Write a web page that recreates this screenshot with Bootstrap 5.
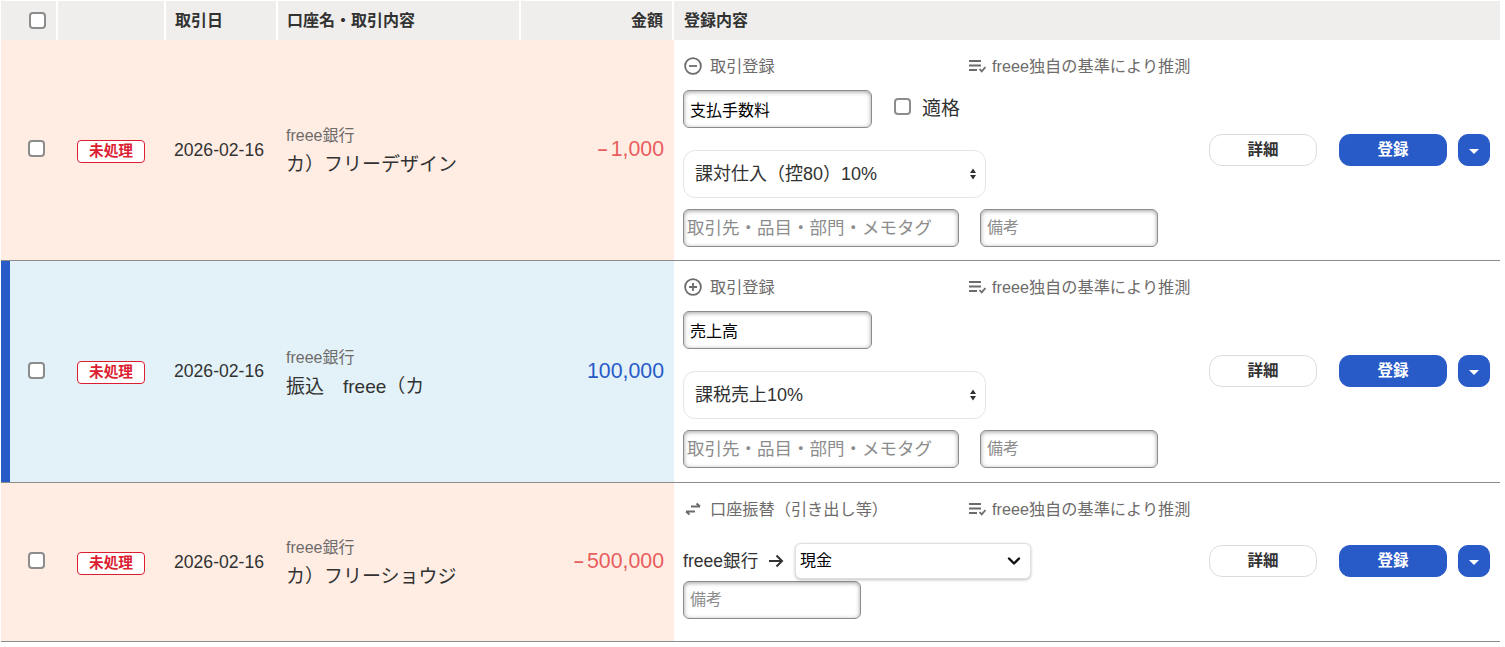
<!DOCTYPE html>
<html lang="ja">
<head>
<meta charset="UTF-8">
<meta name="viewport" content="width=device-width, initial-scale=1.0">
<title>取引一覧</title>
<link href="https://cdn.jsdelivr.net/npm/bootstrap@5.3.0/dist/css/bootstrap.min.css" rel="stylesheet">
<style>
  body { font-family: "Liberation Sans", "Noto Sans CJK JP", sans-serif; color: #323232; background: #fff; }
  .deal-wrap { padding: 1px 0 0 1px; width: 1500px; }
  .deal-table { table-layout: fixed; width: 1499px; margin: 0; border-collapse: separate; border-spacing: 0; }
  .deal-table th { background: #efeeed; height: 39px; padding: 0 9px; font-size: 16px; font-weight: 700; vertical-align: middle; border: 0; border-right: 2px solid #fff; color: #323232; }
  .deal-table th:last-child { border-right: 0; padding-left: 10px; }
  .deal-table td { padding: 0; vertical-align: middle; border: 0; border-bottom: 1px solid #8c8c8c; color: #323232; }
  .row-out td.tone { background: #ffede4; }
  .row-in td.tone { background: #e3f2f8; }
  .row-in td.bar { box-shadow: inset 9px 0 0 #285ac8; }
  td.pick { padding-left: 27px !important; }
  .tick { display: block; width: 17px; height: 17px; margin: 0 0 3px; border: 2px solid #8c8c8c; border-radius: 4px; background: #fff; appearance: none; }
  .th-tick { margin: 0 0 0 28px; }
  .state-tag { display: block; width: 68px; margin: 2px 0 0 19px; height: 23px; line-height: 21px; border: 1px solid #dc1e32; border-radius: 4px; background: #fff; color: #dc1e32; font-size: 14.7px; font-weight: 700; text-align: center; }
  .deal-date { font-size: 17.6px; padding-left: 8px !important; }
  .deal-desc { padding: 4px 0 0 8px !important; }
  .bank-name { font-size: 16px; line-height: 22px; color: #6e6b6b; }
  .deal-name { font-size: 19px; line-height: 28px; margin-top: 4px; }
  .deal-amt { font-size: 21.3px; text-align: right; padding-right: 10px !important; }
  .minus-mark { font-size: 17px; font-weight: 700; margin-right: 3px; }
  .amt-red { color: #e85d5d !important; }
  .amt-blue { color: #285ac8 !important; }
  .form-cell { vertical-align: top !important; padding: 16px 0 0 9px !important; }
  .head-line { height: 20px; font-size: 16.2px; color: #6e6b6b; line-height: 20px; }
  .head-kind { width: 285px; gap: 8px; margin-left: 1px; }
  .head-guess { gap: 6px; }
  .plain-box { border: 1px solid #8c8c8c; border-radius: 6px; background: #fff; box-shadow: inset 0 1px 4px rgba(0,0,0,.38); color: #000; padding: 0 6px; height: 38px; font-size: 16px; min-height: 0; }
  .plain-box::placeholder { color: #8c8c8c; opacity: 1; }
  .acct-box { width: 189px; }
  .tag-box { width: 276px; font-size: 17.5px; padding: 0 3px; }
  .memo-box { width: 178px; }
  .ok-check { margin: 0 0 0 22px; gap: 11px; font-size: 19px; }
  .ok-check .tick { margin: 0 0 6px; }
  .tax-select { width: 303px; height: 48px; border: 1px solid #e5e5e5; border-radius: 12px; padding: 0 11px; font-size: 18px; color: #323232; background-color: #fff; background-size: 8px 12px; background-position: right 8px center; background-image: url("data:image/svg+xml,%3csvg xmlns='http://www.w3.org/2000/svg' viewBox='0 0 8 12'%3e%3cpath fill='%23323232' d='M4 0.5 7 5H1zM4 11.5 1 7h6z'/%3e%3c/svg%3e"); }
  .dest-select { width: 236px; height: 36px; padding: 0 32px 0 4px; font-size: 16px; color: #000; border: 1px solid #e0e0e0; border-radius: 6px; box-shadow: 0 1px 3px rgba(0,0,0,.25); background-position: right 8px center; background-size: 16px 12px; background-image: url("data:image/svg+xml,%3csvg xmlns='http://www.w3.org/2000/svg' viewBox='0 0 16 12'%3e%3cpath fill='none' stroke='%23111' stroke-width='2.4' stroke-linecap='round' stroke-linejoin='round' d='M3 3.5 8 8.5l5-5'/%3e%3c/svg%3e"); }
  .from-acct { font-size: 17.6px; gap: 10px; width: 112px; }
  .act-cell { padding-left: 9px !important; }
  .act-line { margin-bottom: 1px; }
  .act-line-low { margin-bottom: 2px; }
  .act-btn { height: 32px; width: 108px; padding: 0; font-size: 15.5px; font-weight: 700; border-radius: 11px; line-height: 1; }
  .btn-detail { background: #fff; border: 1px solid #dcdcdc; color: #323232; border-radius: 13px; }
  .btn-save { background: #285ac8; border: 1px solid #285ac8; color: #fff; margin-left: 22px; }
  .btn-more { background: #285ac8; border: 1px solid #285ac8; height: 32px; width: 32px; margin-left: 11px; border-radius: 10px; padding: 0; }
  .btn-more span { display: block; margin: 3px auto 0; width: 0; height: 0; border-left: 5px solid transparent; border-right: 5px solid transparent; border-top: 5px solid #fff; }
</style>
</head>
<body>
<div class="deal-wrap">
  <table class="table deal-table">
    <colgroup>
      <col style="width:57px"><col style="width:108px"><col style="width:112px"><col style="width:243px"><col style="width:153px"><col style="width:526px"><col style="width:300px">
    </colgroup>
    <thead>
      <tr>
        <th class="p-0"><input class="tick th-tick" type="checkbox"></th>
        <th></th>
        <th>取引日</th>
        <th>口座名・取引内容</th>
        <th class="text-end">金額</th>
        <th colspan="2">登録内容</th>
      </tr>
    </thead>
    <tbody>
      <!-- 1行目 -->
      <tr class="row-out">
        <td class="tone pick"><input class="tick" type="checkbox"></td>
        <td class="tone"><span class="state-tag">未処理</span></td>
        <td class="tone deal-date">2026-02-16</td>
        <td class="tone deal-desc"><div class="bank-name">freee銀行</div><div class="deal-name">カ）フリーデザイン</div></td>
        <td class="tone deal-amt amt-red"><span class="minus-mark">−</span>1,000</td>
        <td class="form-cell" style="height:221px">
          <div class="d-flex head-line">
            <div class="d-flex align-items-center head-kind">
              <svg width="18" height="18" viewBox="0 0 18 18" fill="none" stroke="#6e6b6b" stroke-width="1.8"><circle cx="9" cy="9" r="7.9"/><path d="M5 9h8"/></svg>
              <span>取引登録</span>
            </div>
            <div class="d-flex align-items-center head-guess">
              <svg width="17" height="14" viewBox="0 0 17 14" fill="none" stroke="#6e6b6b" stroke-width="2"><path d="M0 2h12M0 6.5h12M0 11h8"/><path stroke-width="1.8" d="M10.5 10l2.2 2.4L16.500 8"/></svg>
              <span>freee独自の基準により推測</span>
            </div>
          </div>
          <div class="d-flex align-items-center" style="margin-top:14px">
            <input class="form-control plain-box acct-box" value="支払手数料">
            <label class="d-flex align-items-center ok-check"><input class="tick" type="checkbox"><span>適格</span></label>
          </div>
          <select class="form-select tax-select" style="margin-top:22px"><option>課対仕入（控80）10%</option></select>
          <div class="d-flex" style="margin-top:11px;gap:21px">
            <input class="form-control plain-box tag-box" placeholder="取引先・品目・部門・メモタグ">
            <input class="form-control plain-box memo-box" placeholder="備考">
          </div>
        </td>
        <td class="act-cell">
          <div class="d-flex align-items-center act-line">
            <button class="btn act-btn btn-detail">詳細</button>
            <button class="btn act-btn btn-save">登録</button>
            <button class="btn btn-more"><span></span></button>
          </div>
        </td>
      </tr>
      <!-- 2行目 -->
      <tr class="row-in">
        <td class="tone bar pick"><input class="tick" type="checkbox"></td>
        <td class="tone"><span class="state-tag">未処理</span></td>
        <td class="tone deal-date">2026-02-16</td>
        <td class="tone deal-desc"><div class="bank-name">freee銀行</div><div class="deal-name">振込　freee（カ</div></td>
        <td class="tone deal-amt amt-blue">100,000</td>
        <td class="form-cell" style="height:222px">
          <div class="d-flex head-line">
            <div class="d-flex align-items-center head-kind">
              <svg width="18" height="18" viewBox="0 0 18 18" fill="none" stroke="#6e6b6b" stroke-width="1.8"><circle cx="9" cy="9" r="7.9"/><path d="M5 9h8M9 5v8"/></svg>
              <span>取引登録</span>
            </div>
            <div class="d-flex align-items-center head-guess">
              <svg width="17" height="14" viewBox="0 0 17 14" fill="none" stroke="#6e6b6b" stroke-width="2"><path d="M0 2h12M0 6.5h12M0 11h8"/><path stroke-width="1.8" d="M10.5 10l2.2 2.4L16.500 8"/></svg>
              <span>freee独自の基準により推測</span>
            </div>
          </div>
          <div class="d-flex align-items-center" style="margin-top:14px">
            <input class="form-control plain-box acct-box" value="売上高">
          </div>
          <select class="form-select tax-select" style="margin-top:22px"><option>課税売上10%</option></select>
          <div class="d-flex" style="margin-top:11px;gap:21px">
            <input class="form-control plain-box tag-box" placeholder="取引先・品目・部門・メモタグ">
            <input class="form-control plain-box memo-box" placeholder="備考">
          </div>
        </td>
        <td class="act-cell">
          <div class="d-flex align-items-center act-line">
            <button class="btn act-btn btn-detail">詳細</button>
            <button class="btn act-btn btn-save">登録</button>
            <button class="btn btn-more"><span></span></button>
          </div>
        </td>
      </tr>
      <!-- 3行目 -->
      <tr class="row-out">
        <td class="tone pick"><input class="tick" type="checkbox"></td>
        <td class="tone"><span class="state-tag">未処理</span></td>
        <td class="tone deal-date">2026-02-16</td>
        <td class="tone deal-desc"><div class="bank-name">freee銀行</div><div class="deal-name">カ）フリーショウジ</div></td>
        <td class="tone deal-amt amt-red"><span class="minus-mark">−</span>500,000</td>
        <td class="form-cell" style="height:159px">
          <div class="d-flex head-line">
            <div class="d-flex align-items-center head-kind">
              <svg width="18" height="18" viewBox="0 0 18 18" fill="none" stroke="#6e6b6b" stroke-width="2"><path d="M7 6.5h9M12.5 3.5 16 6.5"/><path d="M2 11.500h9M5.500 14.500 2 11.500"/></svg>
              <span>口座振替（引き出し等）</span>
            </div>
            <div class="d-flex align-items-center head-guess">
              <svg width="17" height="14" viewBox="0 0 17 14" fill="none" stroke="#6e6b6b" stroke-width="2"><path d="M0 2h12M0 6.5h12M0 11h8"/><path stroke-width="1.8" d="M10.5 10l2.2 2.4L16.500 8"/></svg>
              <span>freee独自の基準により推測</span>
            </div>
          </div>
          <div class="d-flex align-items-center" style="margin-top:24px">
            <div class="d-flex align-items-center from-acct">
              <span>freee銀行</span>
              <svg width="16" height="14" viewBox="0 0 16 14" fill="none" stroke="#323232" stroke-width="2"><path d="M1 7h13M8.500 1.500 14 7l-5.500 5.500"/></svg>
            </div>
            <select class="form-select dest-select"><option>現金</option></select>
          </div>
          <input class="form-control plain-box memo-box" style="margin-top:2px" placeholder="備考">
        </td>
        <td class="act-cell">
          <div class="d-flex align-items-center act-line-low">
            <button class="btn act-btn btn-detail">詳細</button>
            <button class="btn act-btn btn-save">登録</button>
            <button class="btn btn-more"><span></span></button>
          </div>
        </td>
      </tr>
    </tbody>
  </table>
</div>
<script src="https://cdn.jsdelivr.net/npm/bootstrap@5.3.0/dist/js/bootstrap.bundle.min.js"></script>
</body>
</html>
